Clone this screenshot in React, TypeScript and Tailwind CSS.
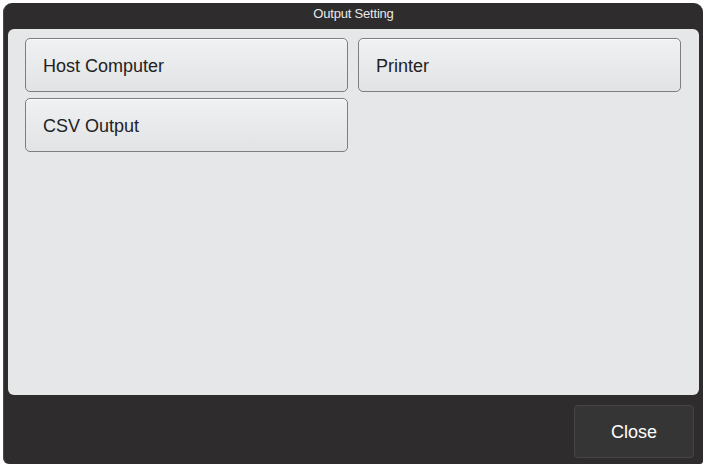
import React from "react";

const font = { fontFamily: '"Liberation Sans", Arial, sans-serif' };

function OptBtn({ label }: { label: string }) {
  return (
    <button
      className="h-[54px] w-[323px] rounded-[5px] border border-[#7c7e80] bg-gradient-to-b from-[#f0f1f3] to-[#e1e3e5] pl-[17px] pt-[3px] text-left text-[18px] text-[#222] shadow-[inset_0_1px_0_#fafbfc]"
      style={font}
    >
      {label}
    </button>
  );
}

export default function App() {
  return (
    <div className="h-[471px] w-[708px] bg-white pl-[3px] pt-[3px]" style={font}>
      <div className="flex h-[461px] w-[700px] flex-col rounded-t-[9px] rounded-bl-[6px] rounded-br-[3px] border-l border-[#4a4a4a] bg-[#2e2c2d]">
        <div className="flex h-[26px] items-center justify-center pb-[4px] text-[13px] tracking-[-0.2px] text-[#e8e8e8]">
          Output Setting
        </div>
        <div className="ml-[4px] h-[366px] w-[691px] rounded-[6px] bg-[#e6e7e9] pl-[17px] pt-[9px]">
          <div className="grid grid-cols-[323px_323px] gap-x-[10px] gap-y-[6px]">
            <OptBtn label="Host Computer" />
            <OptBtn label="Printer" />
            <OptBtn label="CSV Output" />
          </div>
        </div>
        <div className="flex justify-end pr-[9px] pt-[10px]">
          <button
            className="h-[53px] w-[120px] rounded-[4px] border border-[#454545] bg-[#353535] pt-[2px] text-[18px] text-white"
            style={font}
          >
            Close
          </button>
        </div>
      </div>
    </div>
  );
}
